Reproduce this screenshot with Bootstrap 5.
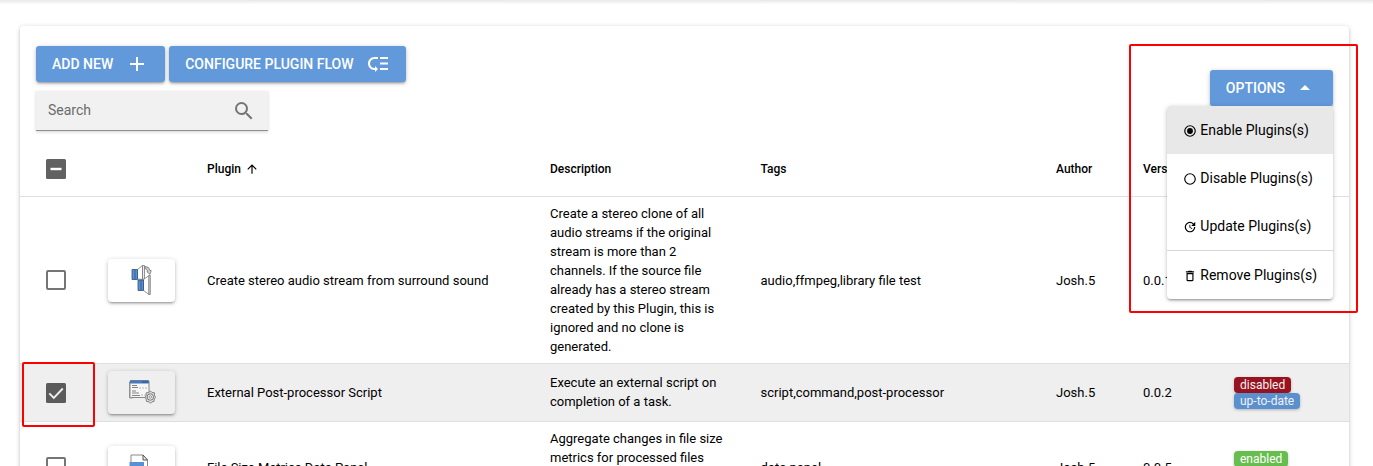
<!DOCTYPE html>
<html lang="en">
<head>
<meta charset="utf-8">
<meta name="viewport" content="width=device-width, initial-scale=1">
<title>Plugins</title>
<link rel="stylesheet" href="https://cdn.jsdelivr.net/npm/bootstrap@5.3.0/dist/css/bootstrap.min.css">
<style>
  html, body { height: 100%; overflow: hidden; }
  body { font-family: Roboto, sans-serif; font-size: 14px; color: #000; background: #fff; }
  svg { display: block; flex: none; }
  .top-shade { height: 4px; background: linear-gradient(#e8e8e8, #fdfdfd); }
  .panel { margin: 22px 24px 0 20px; border: 0; border-radius: 4px; --bs-card-bg: #fff; color: #000;
    box-shadow: 0 1px 5px rgba(0,0,0,.2), 0 2px 2px rgba(0,0,0,.14), 0 3px 1px -2px rgba(0,0,0,.12); }
  .panel-head { height: 115px; padding: 20px 16px 0; }
  .btn-tool { --bs-btn-color: #fff; --bs-btn-bg: #6299da; --bs-btn-border-width: 0; --bs-btn-padding-x: 16px; --bs-btn-padding-y: 0;
    --bs-btn-font-size: 14px; --bs-btn-font-weight: 500; --bs-btn-border-radius: 3px; --bs-btn-hover-bg: #5189cc; --bs-btn-hover-color: #fff;
    height: 36px; line-height: 24px; text-transform: uppercase;
    box-shadow: 0 1px 5px rgba(0,0,0,.2), 0 2px 2px rgba(0,0,0,.14), 0 3px 1px -2px rgba(0,0,0,.12); }
  .search-box { width: 232px; height: 40px; margin-top: 9px; padding: 0 12px; background: #f1f1f1; border-bottom: 1px solid #8f8f8f; color: #757575;
    box-shadow: 0 1px 3px rgba(0,0,0,.18); }
  .search-box input { border: 0; background: none; outline: 0; padding: 0; width: 170px; color: #666; }
  .search-box input::placeholder { color: #6b6b6b; opacity: 1; }
  .plugin-table { table-layout: fixed; font-size: 13px; line-height: 19px; --bs-table-color: #000; --bs-table-bg: transparent; color: #000; }
  .plugin-table > :not(caption) > * > * { padding: 8px 16px 6px; border-bottom: 1px solid #dfdfdf; vertical-align: middle; }
  .plugin-table > tbody > tr > .check-cell, .plugin-table > tbody > tr > .state-cell, .plugin-table > tbody > tr > .desc-cell { padding-top: 7px; padding-bottom: 7px; }
  .plugin-table > thead > tr > th { height: 55px; font-size: 12px; font-weight: 500; padding-top: 10px; padding-bottom: 8px; }
  .plugin-table > thead > tr > .check-cell { padding-top: 8px; padding-bottom: 6px; }
  .plugin-table tr.chosen { background: #efefef; }
  .plugin-table > tbody > tr.chosen > td { height: 58px; padding-top: 7px; padding-bottom: 7px; }
  .plugin-table > tbody > tr.chosen > .check-cell, .plugin-table > tbody > tr.chosen > .state-cell { padding-top: 7px; padding-bottom: 5px; }
  .plugin-table > * > tr > .check-cell { padding-left: 26px; }
  .plugin-table > * > tr > .state-cell { padding-right: 0; }
  .thumb { width: 67px; height: 43px; border-radius: 4px;
    box-shadow: 0 1px 5px rgba(0,0,0,.2), 0 2px 2px rgba(0,0,0,.14), 0 3px 1px -2px rgba(0,0,0,.12); }
  .state { display: block; width: max-content; height: 16px; padding: 2px 6px; border-radius: 4px; font-size: 12px; line-height: 12px; font-weight: 400; color: #f1f1f1; box-shadow: 0 1px 3px rgba(0,0,0,.25); }
  .s-off { background: #98131f; } .s-ok { background: #5b90cf; } .s-on { background: #68bd4f; color: #fff; }
  .opt-menu { top: 36px; right: 0; width: 166px; padding: 0; border: 0; border-radius: 4px; --bs-dropdown-bg: #fff; font-size: 14px; overflow: hidden;
    box-shadow: 0 1px 5px rgba(0,0,0,.2), 0 2px 2px rgba(0,0,0,.14), 0 3px 1px -2px rgba(0,0,0,.12); }
  .opt-menu .dropdown-item { height: 48px; padding: 0 0 0 16px; color: #000; gap: 3.300px; }
  .opt-menu .dropdown-item.current { background: #e8e8e8; }
  .opt-menu svg { margin-top: 2px; }
  .opt-menu hr { margin: 0; border-color: #d8d8d8; opacity: 1; }
  .outline-mark { border: 2px solid #f00; border-radius: 2px; pointer-events: none; z-index: 1100; }
  .mark-options { left: 1109px; top: 18px; width: 229px; height: 269px; }
  .mark-check { left: 2px; top: 336px; width: 73px; height: 65px; }
</style>
</head>
<body>
<div class="top-shade"></div>
<main class="card panel position-relative">
  <div class="panel-head d-flex justify-content-between">
    <div>
      <div class="d-flex gap-1">
        <button class="btn btn-tool d-flex align-items-center">Add new
          <svg style="margin-left:12px" width="24" height="24" viewBox="0 0 24 24" fill="#fff"><path d="M19 13h-6v6h-2v-6H5v-2h6V5h2v6h6z"/></svg></button>
        <button class="btn btn-tool d-flex align-items-center">Configure plugin flow
          <svg style="margin-left:12px" width="24" height="24" viewBox="0 0 24 24" fill="#fff"><path d="M14 5h8v2h-8zm0 5.500h8v2h-8zm0 5.500h8v2h-8zM2 11.500C2 15.080 4.920 18 8.500 18H9v2l3-3-3-3v2h-.5C6.020 16 4 13.980 4 11.500S6.020 7 8.500 7H12V5H8.500C4.920 5 2 7.920 2 11.500z"/></svg></button>
      </div>
      <div class="search-box d-flex align-items-center justify-content-between">
        <input type="text" placeholder="Search" aria-label="Search">
        <svg width="24" height="24" viewBox="0 0 24 24" fill="#757575"><path d="M15.500 14h-.79l-.28-.27A6.471 6.471 0 0 0 16 9.500 6.500 6.500 0 1 0 9.500 16c1.610 0 3.090-.59 4.230-1.570l.27.28v.79l5 4.990L20.490 19l-4.990-5zm-6 0C7.010 14 5 11.990 5 9.500S7.010 5 9.500 5 14 7.010 14 9.500 11.990 14 9.500 14z"/></svg>
      </div>
    </div>
    <div class="dropdown mt-4">
      <button class="btn btn-tool d-flex align-items-center">Options
        <svg style="margin-left:8px" width="24" height="24" viewBox="0 0 24 24" fill="#fff"><path d="M7 14l5-5 5 5z"/></svg></button>
      <div class="dropdown-menu opt-menu show">
        <a class="dropdown-item current d-flex align-items-center"><svg width="14" height="14" viewBox="0 0 24 24"><path d="M12 7a5 5 0 1 0 0 10 5 5 0 0 0 0-10zm0-5a10 10 0 1 0 0 20 10 10 0 0 0 0-20zm0 18a8 8 0 1 1 0-16 8 8 0 0 1 0 16z"/></svg><span>Enable Plugins(s)</span></a>
        <a class="dropdown-item d-flex align-items-center"><svg width="14" height="14" viewBox="0 0 24 24"><path d="M12 2a10 10 0 1 0 0 20 10 10 0 0 0 0-20zm0 18a8 8 0 1 1 0-16 8 8 0 0 1 0 16z"/></svg><span>Disable Plugins(s)</span></a>
        <a class="dropdown-item d-flex align-items-center"><svg width="14" height="14" viewBox="0 0 24 24"><path d="M21 10.120h-6.780l2.740-2.820c-2.730-2.700-7.150-2.800-9.880-.1a6.875 6.875 0 0 0 0 9.790 7.020 7.020 0 0 0 9.880 0C18.320 15.650 19 14.080 19 12.100h2c0 1.980-.88 4.550-2.640 6.290-3.510 3.480-9.210 3.480-12.720 0-3.500-3.470-3.530-9.110-.02-12.580a8.987 8.987 0 0 1 12.650 0L21 3v7.120zM12.500 8v4.250l3.500 2.080-.72 1.210L11 13V8h1.500z"/></svg><span>Update Plugins(s)</span></a>
        <hr>
        <a class="dropdown-item d-flex align-items-center"><svg width="14" height="14" viewBox="0 0 24 24"><path d="M6 19c0 1.100.9 2 2 2h8c1.100 0 2-.9 2-2V7H6v12zM8 9h8v10H8V9zm7.500-5l-1-1h-5l-1 1H5v2h14V4z"/></svg><span>Remove Plugins(s)</span></a>
      </div>
    </div>
  </div>

  <table class="table plugin-table mb-0">
    <colgroup><col style="width:72px"><col style="width:99px"><col style="width:343px"><col style="width:210.500px"><col style="width:295.500px"><col style="width:87px"><col style="width:91px"><col></colgroup>
    <thead>
      <tr>
        <th class="check-cell"><svg width="20" height="20" viewBox="0 0 20 20"><rect width="20" height="20" rx="1.500" fill="#616161"/><path d="M4.500 10h11" stroke="#fff" stroke-width="2.400"/></svg></th>
        <th></th>
        <th><span class="d-flex align-items-center">Plugin<svg style="margin-left:4px" width="14" height="14" viewBox="0 0 24 24"><path d="M4 12l1.410 1.410L11 7.830V20h2V7.830l5.580 5.590L20 12l-8-8z"/></svg></span></th>
        <th>Description</th><th>Tags</th><th>Author</th><th>Version</th><th></th>
      </tr>
    </thead>
    <tbody>
      <tr>
        <td class="check-cell"><svg width="20" height="20" viewBox="0 0 20 20"><rect x="1" y="1" width="18" height="18" rx="1" fill="none" stroke="#757575" stroke-width="2"/></svg></td>
        <td><div class="thumb d-flex align-items-center justify-content-center">
          <svg width="21" height="31" viewBox="0 0 21 31"><g stroke="#777" stroke-width=".8"><path d="M6.500 4.500l5-4v14l-5-.5z" fill="#fff"/><path d="M11.500.5h2v13.500h-2z" fill="#eee"/><path d="M12.500 14.500l5.500-4v19l-5.500-4z" fill="#fff"/><path d="M18 10.500h1.300v19H18z" fill="#eee"/><path d="M14 1.500q4.500 0 5 4h1.200L19 9.500l-3.200-2.800 1-.4q-.5-2-2.800-2.800z" fill="#ccc"/></g><path d="M1 4.500h5.500v10H1zM7 15h5.500v10.500H7z" fill="#5790d5" stroke="#345073" stroke-width=".8"/><path d="M4 4.500v10M10 15v10.500" stroke="#345f94"/></svg></div></td>
        <td>Create stereo audio stream from surround sound</td>
        <td class="desc-cell">Create a stereo clone of all<br>audio streams if the original<br>stream is more than 2<br>channels. If the source file<br>already has a stereo stream<br>created by this Plugin, this is<br>ignored and no clone is<br>generated.</td>
        <td>audio,ffmpeg,library file test</td><td>Josh.5</td><td>0.0.1</td><td></td>
      </tr>
      <tr class="chosen">
        <td class="check-cell"><svg width="20" height="20" viewBox="0 0 20 20"><rect width="20" height="20" rx="1.500" fill="#5b5b5b"/><path d="M3.300 10.300l4.500 4.500 9-9.300" fill="none" stroke="#efefef" stroke-width="1.900"/></svg></td>
        <td><div class="thumb d-flex align-items-center justify-content-center">
          <svg width="28" height="26" viewBox="0 0 28 26"><path d="M1.500 3v16h3" fill="none" stroke="#999"/><rect x="2" y="1.500" width="19" height="17" rx="1" fill="#f6f6f6" stroke="#888"/><path d="M2 1.500h19v3H2z" fill="#4678bd"/><path d="M14.500 3h1M16.500 3h1M18.500 3h1" stroke="#17365f"/><path d="M4 6.500h5M4 8.500h6M4 12h4M4 14h7M4 16.500h8" stroke="#777" stroke-width=".9"/><path d="M11 9h8M13 16h5" stroke="#aaa" stroke-width=".8" stroke-dasharray="2 1"/><path d="M22.500 12l1.500 1.500 2.500.3v2.500l1 2-1.200 1.700-.3 2.500-2 .3-1.500 1.500-1.500-1.500-2.500-.3-.3-2.500-1.200-1.700 1.200-2v-2.500l2.500-.3z" fill="#ddd" stroke="#777" stroke-width=".9"/><circle cx="22.300" cy="18" r="3.200" fill="#eee" stroke="#777"/><circle cx="22.300" cy="18" r="1.300" fill="#eee" stroke="#888" stroke-width=".8"/></svg></div></td>
        <td>External Post-processor Script</td>
        <td>Execute an external script on<br>completion of a task.</td>
        <td>script,command,post-processor</td><td>Josh.5</td><td>0.0.2</td>
        <td class="state-cell"><span class="state s-off">disabled</span><span class="state s-ok">up-to-date</span></td>
      </tr>
      <tr>
        <td class="check-cell"><svg width="20" height="20" viewBox="0 0 20 20"><rect x="1" y="1" width="18" height="18" rx="1" fill="none" stroke="#757575" stroke-width="2"/></svg></td>
        <td><div class="thumb d-flex align-items-center justify-content-center">
          <svg width="26" height="28" viewBox="0 0 26 28"><path d="M2 1h12l4.500 5v20H2z" fill="#fff" stroke="#888"/><path d="M14 1v5h4.500z" fill="#eee" stroke="#555"/><path d="M.5 8H15v10H.5z" fill="#5790d5"/></svg></div></td>
        <td>File Size Metrics Data Panel</td>
        <td class="desc-cell">Aggregate changes in file size<br>metrics for processed files<br>and display them in a<br>data panel.</td>
        <td>data panel</td><td>Josh.5</td><td>0.0.5</td>
        <td class="state-cell"><span class="state s-on">enabled</span><span class="state s-ok">up-to-date</span></td>
      </tr>
    </tbody>
  </table>
  <div class="position-absolute outline-mark mark-options"></div>
  <div class="position-absolute outline-mark mark-check"></div>
</main>
<script src="https://cdn.jsdelivr.net/npm/bootstrap@5.3.0/dist/js/bootstrap.bundle.min.js"></script>
</body>
</html>
